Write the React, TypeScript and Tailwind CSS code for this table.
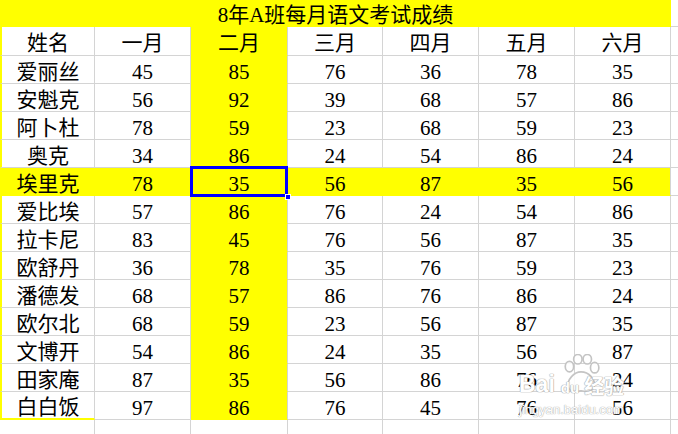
import React from "react";

const months = ["一月", "二月", "三月", "四月", "五月", "六月"];

const rows: [string, number[]][] = [
  ["爱丽丝", [45, 85, 76, 36, 78, 35]],
  ["安魁克", [56, 92, 39, 68, 57, 86]],
  ["阿卜杜", [78, 59, 23, 68, 59, 23]],
  ["奥克", [34, 86, 24, 54, 86, 24]],
  ["埃里克", [78, 35, 56, 87, 35, 56]],
  ["爱比埃", [57, 86, 76, 24, 54, 86]],
  ["拉卡尼", [83, 45, 76, 56, 87, 35]],
  ["欧舒丹", [36, 78, 35, 76, 59, 23]],
  ["潘德发", [68, 57, 86, 76, 86, 24]],
  ["欧尔北", [68, 59, 23, 56, 87, 35]],
  ["文博开", [54, 86, 24, 35, 56, 87]],
  ["田家庵", [87, 35, 56, 86, 76, 24]],
  ["白白饭", [97, 86, 76, 45, 76, 56]],
];

const cols = "grid grid-cols-[95px_96px_97px_95px_96px_96px_96px_1fr]";
const cell = "flex items-center justify-center pt-[5px] border-r border-b border-[#d4d4d4]";

function Watermark() {
  return (
    <div className="absolute z-20 left-[519px] top-[354px] w-[125px] h-[64px] pointer-events-none">
      <svg className="absolute left-[40px] top-[0px]" width="44" height="42" viewBox="0 0 40 40">
        <g fill="#fff" fillOpacity="0.85" stroke="#c4c4c4" strokeWidth="1.6">
          <ellipse cx="9" cy="12" rx="4" ry="5" />
          <ellipse cx="17" cy="5" rx="4" ry="4.5" />
          <ellipse cx="26" cy="5" rx="4" ry="4.5" />
          <ellipse cx="33" cy="13" rx="4" ry="5" />
          <path d="M8 32 C6 24 14 17 20 17 C27 17 35 24 32 32 C30 37 24 36 20 35 C16 36 10 37 8 32 Z" />
        </g>
      </svg>
      <div className="absolute left-0 top-[19px] flex items-end text-white font-bold text-[23px] leading-none [font-family:'Liberation_Sans',Arial,sans-serif] [text-shadow:0_0_1px_#a8a8a8,0_0_1px_#a8a8a8,0_0_1px_#a8a8a8]">
        <span>Bai</span>
        <span className="ml-[6px] text-[15px] mb-[1px]">du</span>
        <span className="ml-[5px] [font-family:'Noto_Sans_CJK_SC',sans-serif] text-[20px]">经验</span>
      </div>
      <div className="absolute left-0 top-[49px] text-white text-[13px] leading-none [font-family:'Liberation_Sans',Arial,sans-serif] [text-shadow:0_0_1px_#a8a8a8,0_0_1px_#a8a8a8]">
        jingyan.baidu.com
      </div>
    </div>
  );
}

export default function App() {
  return (
    <div className="relative w-[678px] h-[434px] overflow-hidden bg-white text-black text-[21px] leading-none [font-family:'Liberation_Serif','Noto_Sans_CJK_SC',serif]">
      <div className="flex h-[27px]">
        <div className="w-[671px] bg-[#ffff00] flex items-center justify-center pt-[3px]">
          8年A班每月语文考试成绩
        </div>
        <div className="flex-1 border-b border-[#d4d4d4]" />
      </div>

      <div className={`${cols} h-[29px]`}>
        <div className={`${cell} border-l-2 border-l-[#ffff00]`}>姓名</div>
        {months.map((m, i) => (
          <div key={m} className={`${cell} ${i === 1 ? "bg-[#ffff00] border-b-[#ffff00]" : ""}`}>
            {m}
          </div>
        ))}
        <div className="border-b border-[#d4d4d4]" />
      </div>

      {rows.map(([name, scores], r) => {
        const hl = r === 4;
        const last = r === rows.length - 1;
        return (
          <div key={name} className={`${cols} h-[28px]`}>
            <div
              className={`${cell} border-l-2 border-l-[#ffff00] ${hl ? "bg-[#ffff00] border-[#ffff00]" : ""} ${
                last ? "border-b-2 border-b-[#ffff00]" : ""
              }`}
            >
              {name}
            </div>
            {scores.map((s, i) => (
              <div
                key={i}
                className={`${cell} relative ${
                  hl && i < 5 ? "bg-[#ffff00] border-[#ffff00]" : ""
                } ${hl && i === 5 ? "bg-[#ffff00] border-b-[#ffff00]" : ""} ${
                  i === 1 ? "bg-[#ffff00] border-b-[#ffff00]" : ""
                }`}
              >
                {s}
                {hl && i === 1 && (
                  <>
                    <div className="absolute z-10 -top-[2px] -left-[1px] -right-[1px] -bottom-[2px] border-[3px] border-[#0000ff]" />
                    <div className="absolute z-10 -right-[4px] -bottom-[5px] w-[6px] h-[6px] bg-[#0000ff] border border-white" />
                  </>
                )}
              </div>
            ))}
            <div className="border-b border-[#d4d4d4]" />
          </div>
        );
      })}

      <div className={`${cols} h-[28px]`}>
        {Array.from({ length: 7 }).map((_, i) => (
          <div key={i} className="border-r border-b border-[#d4d4d4]" />
        ))}
        <div className="border-b border-[#d4d4d4]" />
      </div>

      <Watermark />
    </div>
  );
}
